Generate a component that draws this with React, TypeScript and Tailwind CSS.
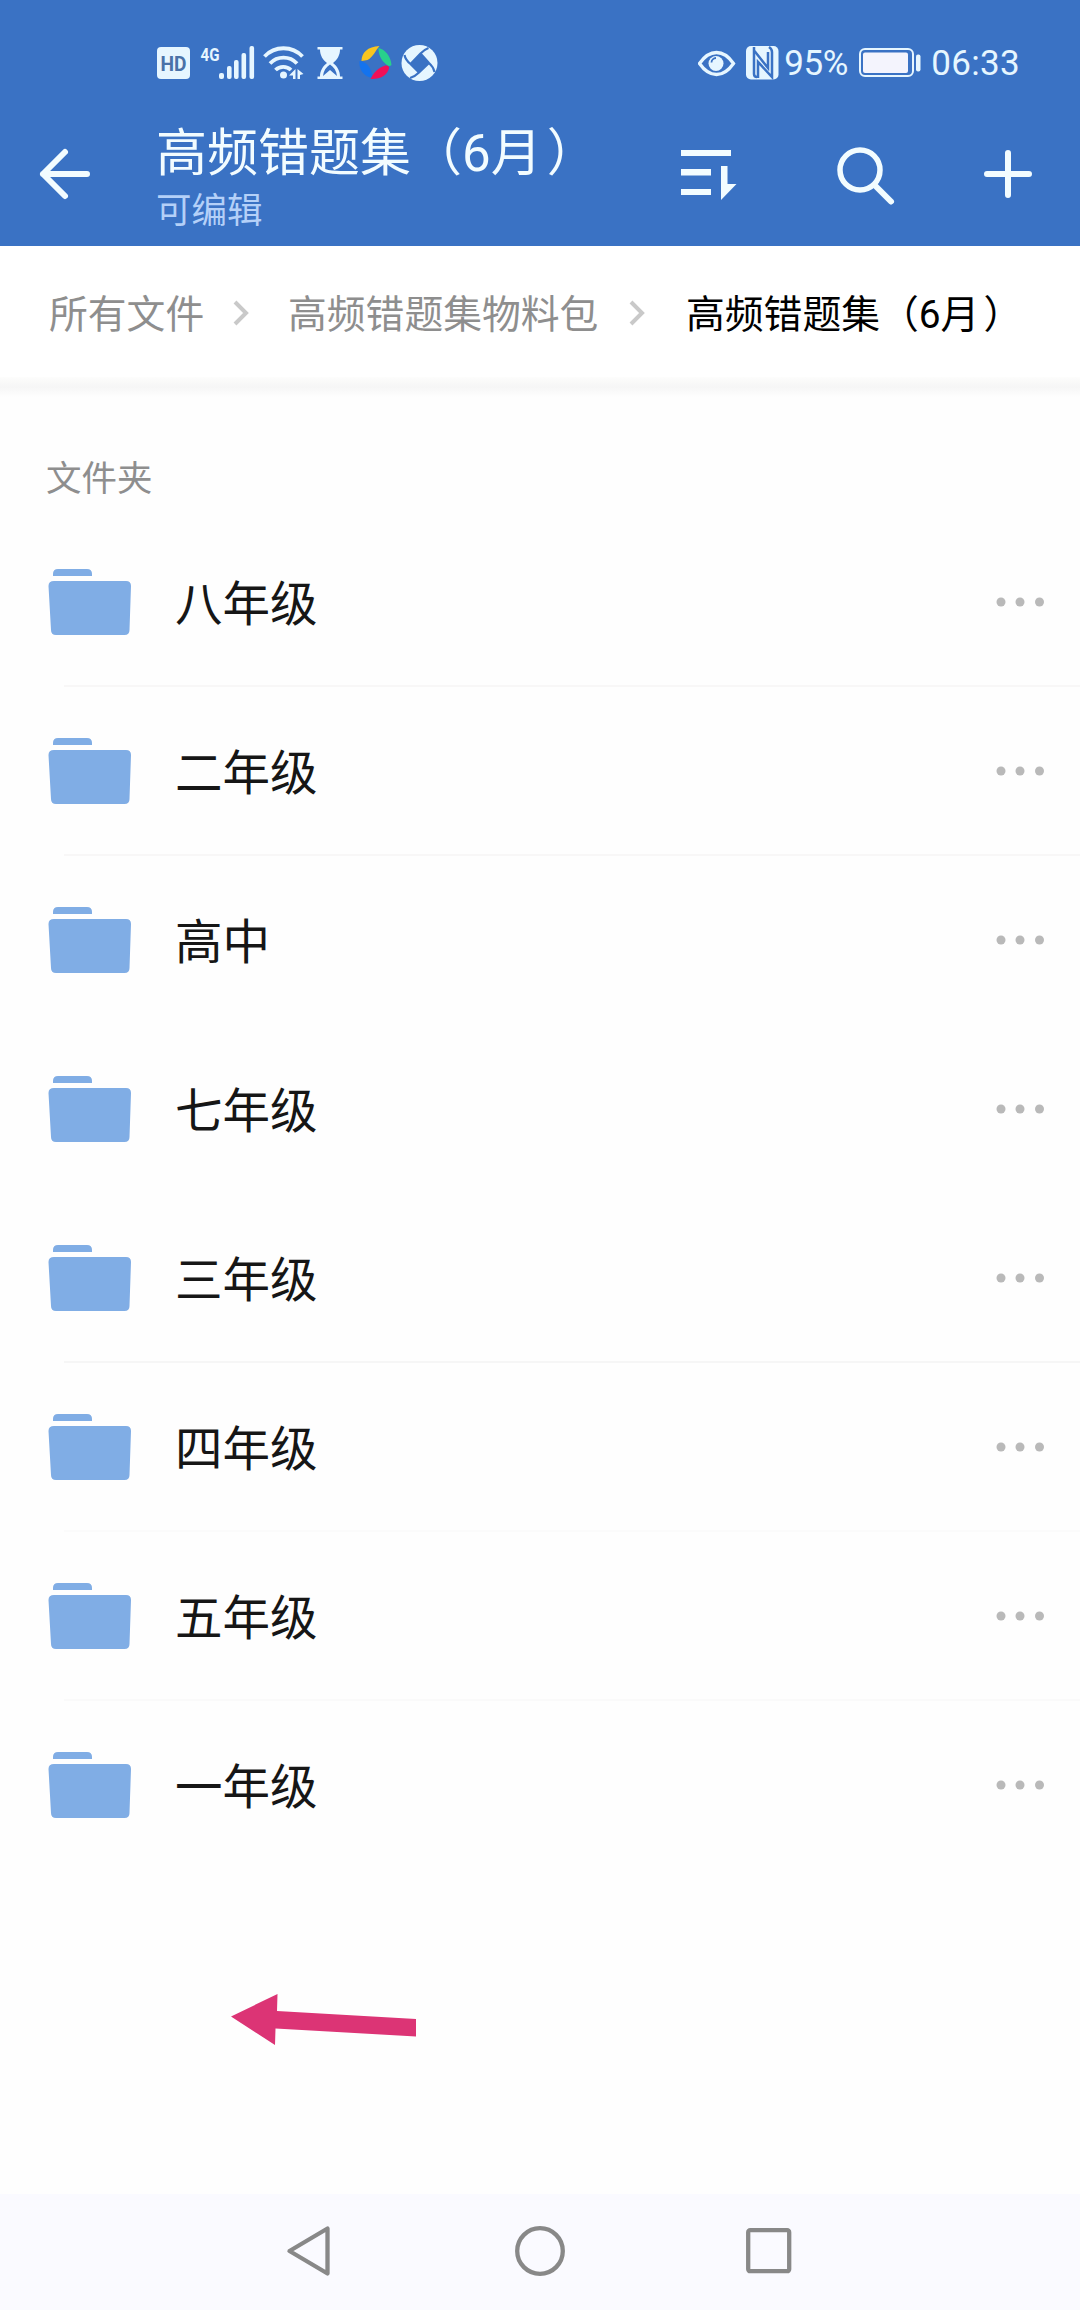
import React from 'react';

interface FolderRowProps {
  name: string;
  divider: string;
}

const folders = [
  { name: '八年级', divider: 'border-[#f8f7f7]' },
  { name: '二年级', divider: 'border-[#f8f7f7]' },
  { name: '高中', divider: 'border-transparent' },
  { name: '七年级', divider: 'border-transparent' },
  { name: '三年级', divider: 'border-[#f6f6f6]' },
  { name: '四年级', divider: 'border-[#fbfbfb]' },
  { name: '五年级', divider: 'border-[#fafafa]' },
  { name: '一年级', divider: 'border-transparent' }
];

const StatusBar: React.FC = () => (
  <div className="flex h-[110px] items-center justify-between pt-[15px] pr-[60px] pl-[157px] text-[#e6f6ff]">
    <svg width="282" height="40" viewBox="0 0 282 40" fill="currentColor">
      {/* HD badge */}
      <rect x="0" y="4" width="33" height="32" rx="4" />
      <text x="16.5" y="27.5" textAnchor="middle" fontSize="21" fontWeight="700" fill="#4a72a8" fontFamily="Roboto, sans-serif" textLength="26" lengthAdjust="spacingAndGlyphs">HD</text>
      {/* Signal */}
      <text x="43.5" y="17.5" fontSize="19" fontWeight="700" fontFamily="Roboto, sans-serif" textLength="19" lengthAdjust="spacingAndGlyphs">4G</text>
      <rect x="62" y="30" width="5" height="6" rx="2" />
      <rect x="70" y="23" width="4.6" height="13" rx="2" />
      <rect x="77" y="17" width="4.6" height="19" rx="2" />
      <rect x="84.5" y="10" width="4.6" height="26" rx="2" />
      <rect x="92.5" y="3" width="4.6" height="33" rx="2" />
      {/* Wifi */}
      <g fill="none" stroke="currentColor" strokeWidth="3.8">
        <path d="M107.500 13.500a26 26 0 0 1 38 0" />
        <path d="M113 20.500a18.500 18.500 0 0 1 27 0" />
        <path d="M118.500 27a11 11 0 0 1 15.500 0" />
      </g>
      <circle cx="126.500" cy="32" r="3.500" />
      <path d="M138.500 26v10h-2.500v-3.500h-4zM140.500 26l6 5-3.500 1v4h-2.500z" />
      {/* Hourglass */}
      <path d="M160.500 4h25v2.500h-2.500c0 6-3 10.500-7 13.500 4 3 7 7.500 7 13.500h2.500V36h-25v-2.500h2.500c0-6 3-10.500 7-13.500-4-3-7-7.500-7-13.500h-2.500z" />
      <path d="M173 21.500c-4 2.500-6.500 6.500-7 11.500l7-6 7 6c-.5-5-3-9-7-11.500z" fill="#3a72c4" />
      {/* Coloured pinwheel */}
      <path d="M204.500 18c0-8 6-14.500 18-15-4 4-6 11-12 14z" fill="#f8c520" />
      <path d="M221.500 5c6 1 12.500 8 13 17-1 1-3 1.500-4.500 0-4-3-8.500-8-8.500-17z" fill="#28d08c" />
      <path d="M202.500 18c8 1 12 7 13 17-8-1-14-8-13-17z" fill="#1473ee" />
      <path d="M213.500 36c3-6 7-11 15-13.500 2.500-.5 4 1 3.500 3-2 7-9 11-18.500 10.500z" fill="#f00f58" />
      {/* White pinwheel */}
      <circle cx="262.500" cy="20" r="18" />
      <path d="M253.500 21l10-10.500 8.500 9.500-10 9.500z" fill="#3a72c4" />
      <g stroke="#3a72c4" strokeWidth="2.200" fill="none">
        <path d="M253.500 21l10-10.500q4-4 8-5.500" />
        <path d="M263.500 10.500l8.500 9.500q4.500 4 5.500 9" />
        <path d="M272 20l-10 9.500q-4 4-9 5.500" />
        <path d="M262 29.500l-8.500-8.500q-5-4-6-9" />
      </g>
    </svg>

    <div className="flex items-center">
      <svg width="84" height="40" viewBox="0 0 84 40" fill="none" stroke="currentColor">
        <path d="M1.500 20.500C6 14 12 9.500 18.500 9.500S31 14 35.500 20.500C31 27 25 31.500 18.500 31.500S6 27 1.500 20.500z" strokeWidth="3.300" />
        <circle cx="18" cy="20.500" r="7.500" fill="currentColor" stroke="none" />
        <path d="M13.500 19.500a4.500 4.500 0 0 1 4.500-4.500" stroke="#3a72c4" strokeWidth="1.800" />
        <rect x="48" y="3" width="32.500" height="33.500" rx="5" fill="currentColor" stroke="none" />
        {/* NFC mark */}
        <path d="M56 4v27q0 3 3 3" stroke="#3a72c4" strokeWidth="2.500" />
        <path d="M56.500 8l13.500 17V9M60 35V19l14 15V9q0-3-3-5" stroke="#3a72c4" strokeWidth="2.500" />
      </svg>
      <span className="ml-[2px] w-[69px] pt-[2px] text-[35px] leading-[40px] tracking-[-0.5px]">95%</span>
      <svg className="ml-[6px]" width="62" height="32" viewBox="0 0 62 32">
        <rect x="1" y="2" width="53" height="27" rx="5" fill="none" stroke="currentColor" strokeWidth="2" />
        <rect x="4" y="5.500" width="45" height="20.500" rx="2" fill="#f4f4fd" />
        <rect x="57" y="7.500" width="4.500" height="17" rx="2" fill="currentColor" />
      </svg>
      <span className="ml-[10px] pt-[2px] text-[35px] leading-[40px] tracking-[0.3px]">06:33</span>
    </div>
  </div>
);

const TitleBar: React.FC = () => (
  <div className="flex h-[136px] items-start text-[#f2fcff]">
    <svg className="mt-[34px] ml-[38px]" width="54" height="60" viewBox="0 0 54 60" fill="none" stroke="currentColor" strokeWidth="6" strokeLinecap="round" strokeLinejoin="round">
      <path d="M49 30H5M27 8L5 30l22 22" />
    </svg>
    <div className="ml-[64px] w-[440px] whitespace-nowrap">
      <h1 className="mt-[11px] text-[51px] leading-[66px]">
        高频错题集（6月<span className="ml-[5px]">）</span>
      </h1>
      <p className="mt-[2px] text-[35.5px] leading-[44px] text-[#b4d0f8]">可编辑</p>
    </div>
    <svg className="mt-[38px] ml-[84px]" width="58" height="52" viewBox="0 0 58 52" fill="currentColor">
      <path d="M1 2h50v6H1zM1 21h30v6.500H1zM1 41h30v6H1zM41 18h6.500v18h9L41 52z" />
    </svg>
    <svg className="mt-[36px] ml-[98px]" width="60" height="62" viewBox="0 0 60 62" fill="none" stroke="currentColor" strokeWidth="5.5" strokeLinecap="round">
      <circle cx="24" cy="24" r="20" />
      <path d="M39 39.500l16 16" strokeWidth="6" />
    </svg>
    <svg className="mt-[38px] ml-[86px]" width="52" height="52" viewBox="0 0 52 52" fill="none" stroke="currentColor" strokeWidth="6" strokeLinecap="round">
      <path d="M5 26h42M26 5v42" />
    </svg>
  </div>
);

const Chevron: React.FC<{ className: string }> = ({ className }) => (
  <svg className={className} width="18" height="28" viewBox="0 0 18 28" fill="none" stroke="#c9c9c9" strokeWidth="4">
    <path d="M3 3l11 11L3 25" />
  </svg>
);

const Breadcrumb: React.FC = () => (
  <div className="flex h-[131px] items-center whitespace-nowrap bg-white pl-[49px] text-[38.8px] text-[#8e8e8e]">
    <span className="w-[155px] pt-[8px]">所有文件</span>
    <Chevron className="mt-[3px] mr-[38px] ml-[28px]" />
    <span className="w-[311px] pt-[8px]">高频错题集物料包</span>
    <Chevron className="mt-[3px] mr-[40px] ml-[29px]" />
    <span className="pt-[8px] text-black">
      高频错题集（6月<span className="ml-[4px]">）</span>
    </span>
  </div>
);

const FolderRow: React.FC<FolderRowProps> = ({ name, divider }) => (
  <div className="relative flex h-[169px] items-center">
    <svg className="ml-[48px]" width="84" height="68" viewBox="0 0 84 68" fill="#80ade5">
      <path d="M5 8V6q0-5 5-5h29q5 0 5 5v2z" />
      <path d="M6 13h72q5 0 5 5l-1.500 44q0 5-5 5H8q-5 0-5-5L.5 18q0-5 5.500-5z" />
    </svg>
    <span className="ml-[43px] pt-[7px] text-[47.5px] leading-[60px] text-[#161616]">{name}</span>
    <svg className="mr-[35px] ml-auto" width="50" height="12" viewBox="0 0 50 12" fill="#b9b9b9">
      <circle cx="6" cy="6" r="4.5" />
      <circle cx="25" cy="6" r="4.5" />
      <circle cx="44.5" cy="6" r="4.5" />
    </svg>
    <div className={`absolute right-0 -bottom-px left-[64px] border-b-2 ${divider}`} />
  </div>
);

const NavBar: React.FC = () => (
  <div className="flex h-[116px] items-center bg-[#fafaff] pb-[2px]">
    <svg className="ml-[286px]" width="46" height="52" viewBox="0 0 46 52" fill="none" stroke="#888" strokeWidth="4.3" strokeLinejoin="round">
      <path d="M3.500 26L41.500 3.500v45z" />
    </svg>
    <svg className="ml-[182px]" width="52" height="52" viewBox="0 0 52 52" fill="none" stroke="#888" strokeWidth="4.3">
      <circle cx="26" cy="26" r="22.8" />
    </svg>
    <svg className="ml-[179px]" width="48" height="48" viewBox="0 0 48 48" fill="none" stroke="#888" strokeWidth="4.3">
      <rect x="3.2" y="3.2" width="41" height="41" rx="2" />
    </svg>
  </div>
);

export default function App() {
  return (
    <div className="flex h-[2310px] w-[1080px] flex-col overflow-hidden bg-[#fefefe] font-[Roboto,'Noto_Sans_CJK_SC',sans-serif]">
      <header className="bg-[#3a72c4]">
        <StatusBar />
        <TitleBar />
      </header>
      <Breadcrumb />
      <div className="h-[20px] bg-linear-to-b from-[#fdfdfc] via-[#f6f6f6] to-[#fefefe]" />
      <main className="flex flex-1 flex-col">
        <h2 className="h-[120px] pt-[56px] pl-[46px] text-[35.5px] leading-[52px] text-[#8e8e8e]">文件夹</h2>
        {folders.map(folder => (
          <FolderRow key={folder.name} name={folder.name} divider={folder.divider} />
        ))}
        {/* Pointer drawn on the empty area */}
        <svg className="mt-[121px] ml-[231px]" width="188" height="56" viewBox="0 0 188 56" fill="#dc3475">
          <path d="M0 26.500L46.500 4l-.5 17L185 29v17.500L44.500 38.500 44 55z" />
        </svg>
      </main>
      <NavBar />
    </div>
  );
}
